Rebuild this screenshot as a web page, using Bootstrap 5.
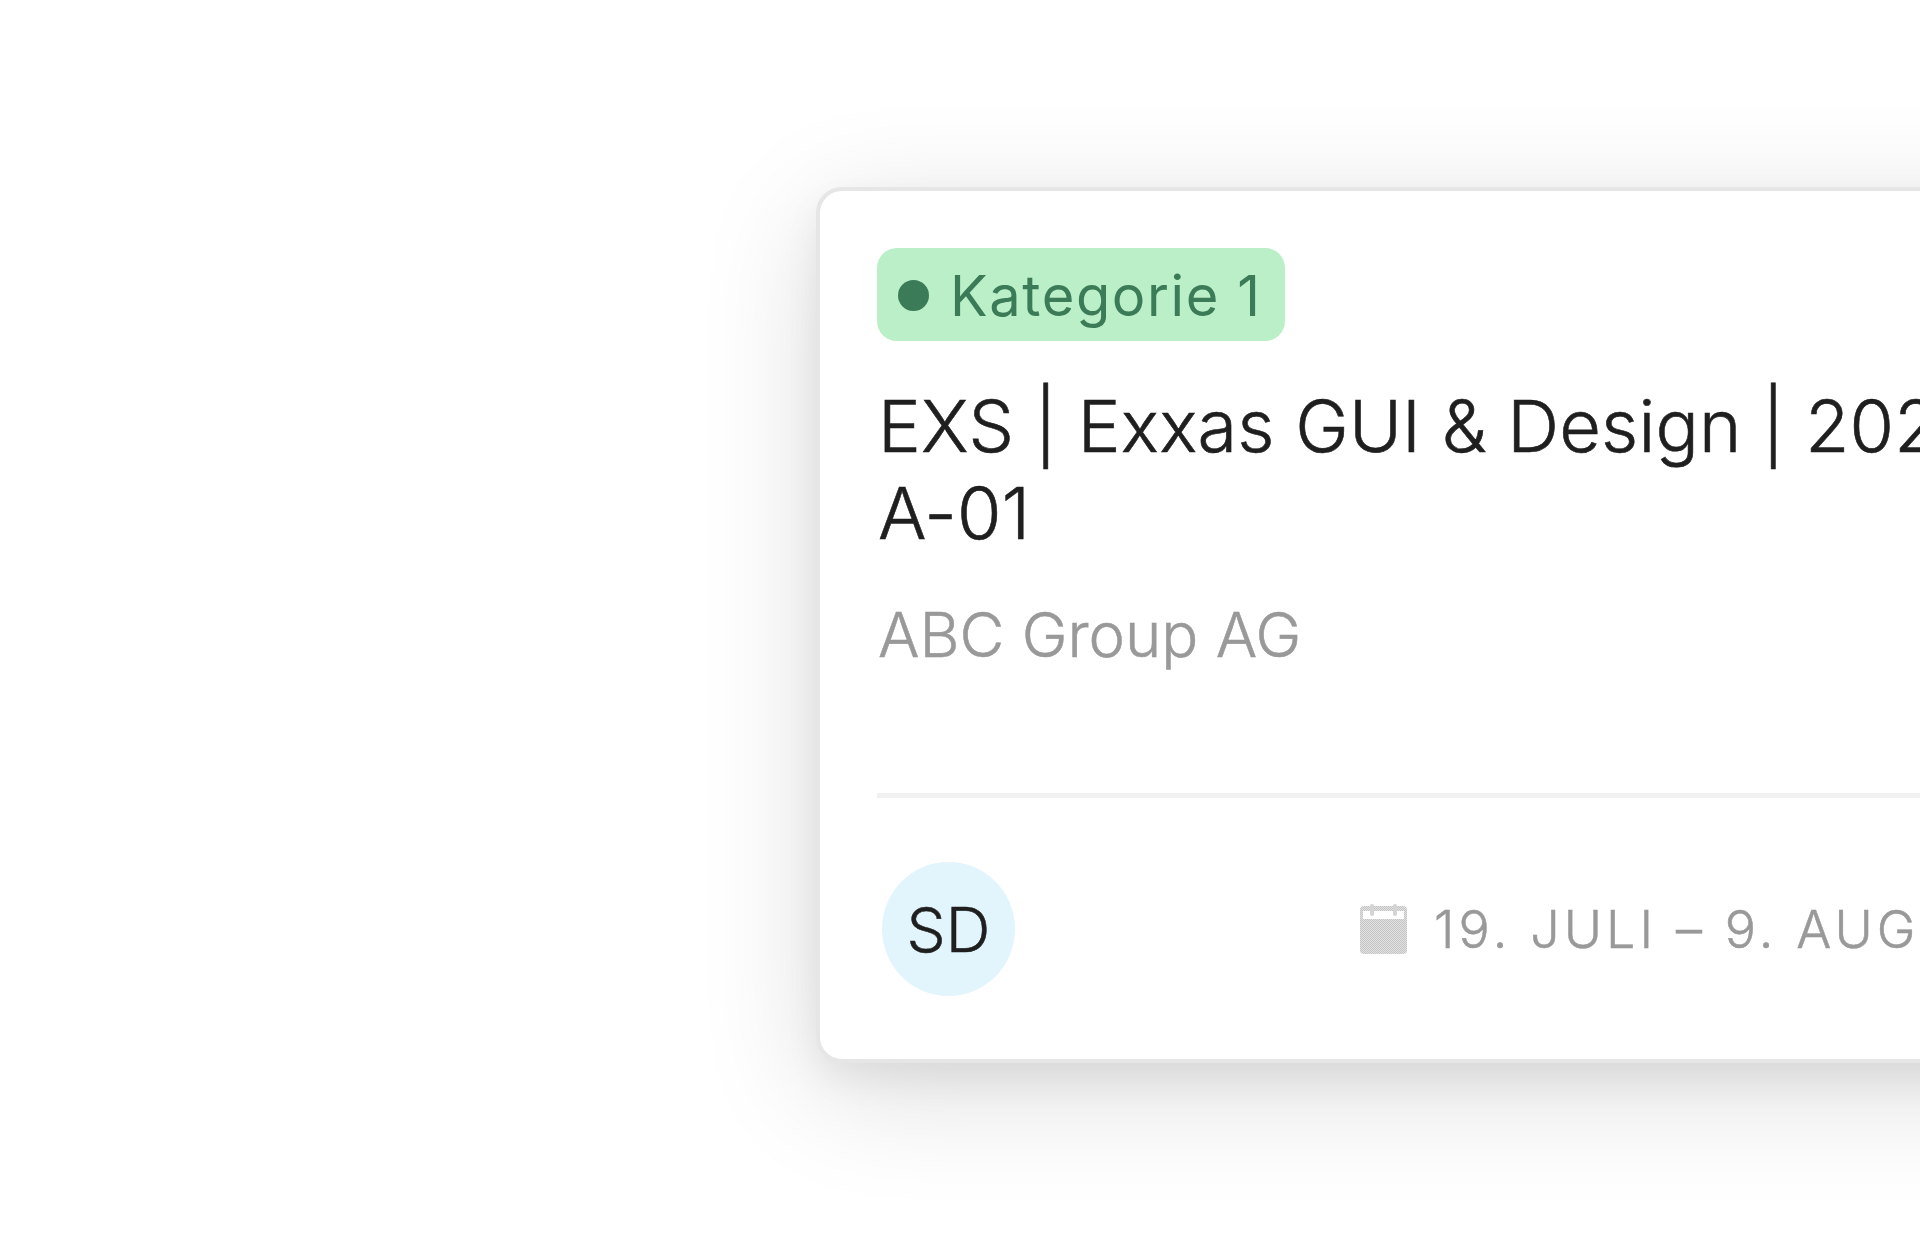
<!DOCTYPE html>
<html lang="de">
<head>
  <meta charset="UTF-8" />
  <meta name="viewport" content="width=device-width, initial-scale=1.0" />
  <title>Projektkarte</title>
  <link href="https://cdn.jsdelivr.net/npm/bootstrap@5.3.3/dist/css/bootstrap.min.css" rel="stylesheet" />
  <style>
    body {
      background-color: #fff;
      font-family: Inter, "Liberation Sans", sans-serif;
      height: 1248px;
      overflow: hidden;
    }
    .stage {
      padding: 187px 0 0 816px;
    }
    .project-card {
      width: 1300px;
      height: 876px;
      background-color: #fff;
      border: 4px solid #e6e6e6;
      border-radius: 26px;
      box-shadow: 0 28px 120px rgba(0, 0, 0, .14), 0 16px 36px rgba(0, 0, 0, .06);
      padding: 57px 57px 0;
    }
    .category-chip {
      width: 408px;
      height: 93px;
      background-color: #bbefc8;
      color: #3b7b58;
      border-radius: 20px;
      font-size: 56px;
      letter-spacing: 1.6px;
      padding-left: 21px;
      padding-top: 2px;
      gap: 21px;
    }
    .category-dot {
      width: 31px;
      height: 31px;
      background-color: #3b7b58;
    }
    .project-title {
      color: #1f1f1f;
      font-size: 72px;
      font-weight: 300;
      -webkit-text-stroke: .6px #1f1f1f;
      letter-spacing: .2px;
      line-height: 87px;
      margin: 41px 0 0 1px;
    }
    .project-client {
      color: #999;
      font-size: 61.6px;
      font-weight: 300;
      -webkit-text-stroke: .5px #999;
      line-height: 72px;
      margin: 43px 0 0 1px;
    }
    .card-rule {
      height: 5px;
      background-color: #f1f1f1;
      margin-top: 122px;
    }
    .card-foot {
      margin-top: 64px;
      padding-left: 5px;
    }
    .avatar-circle {
      width: 133px;
      height: 134px;
      background-color: #e3f5fc;
      color: #1f1f1f;
      font-size: 62px;
      font-weight: 300;
      -webkit-text-stroke: .5px #1f1f1f;
    }
    .date-range {
      color: #999;
      font-size: 52px;
      font-weight: 300;
      -webkit-text-stroke: .5px #999;
      letter-spacing: 4.1px;
      margin-left: 345px;
      gap: 27px;
    }
    .date-label {
      padding-top: 2px;
    }
  </style>
</head>
<body>
  <div class="stage">
    <!-- Card -->
    <div class="project-card">
      <div class="category-chip d-flex align-items-center">
        <span class="category-dot rounded-circle flex-shrink-0"></span>
        <span>Kategorie 1</span>
      </div>
      <h1 class="project-title">EXS | Exxas GUI &amp; Design | 2024-A-01</h1>
      <p class="project-client">ABC Group AG</p>
      <div class="card-rule"></div>
      <div class="card-foot d-flex align-items-center text-nowrap">
        <div class="avatar-circle rounded-circle d-flex align-items-center justify-content-center flex-shrink-0">SD</div>
        <div class="date-range d-flex align-items-center">
          <svg width="47" height="50" viewBox="0 0 47 50" class="flex-shrink-0">
            <defs>
              <pattern id="dither" width="2" height="2" patternUnits="userSpaceOnUse">
                <rect width="2" height="2" fill="#e2e2e2"/>
                <rect width="1" height="1" fill="#c4c4c4"/>
                <rect x="1" y="1" width="1" height="1" fill="#c4c4c4"/>
              </pattern>
            </defs>
            <rect x="0" y="2" width="47" height="48" rx="4" fill="url(#dither)"/>
            <rect x="3" y="7" width="41" height="8" fill="#fff"/>
            <rect x="10" y="0" width="4" height="12" rx="2" fill="#d4d4d4"/>
            <rect x="33" y="0" width="4" height="12" rx="2" fill="#d4d4d4"/>
          </svg>
          <span class="date-label">19. JULI – 9. AUGUST 2024</span>
        </div>
      </div>
    </div>
  </div>
  <script src="https://cdn.jsdelivr.net/npm/bootstrap@5.3.3/dist/js/bootstrap.bundle.min.js"></script>
</body>
</html>
